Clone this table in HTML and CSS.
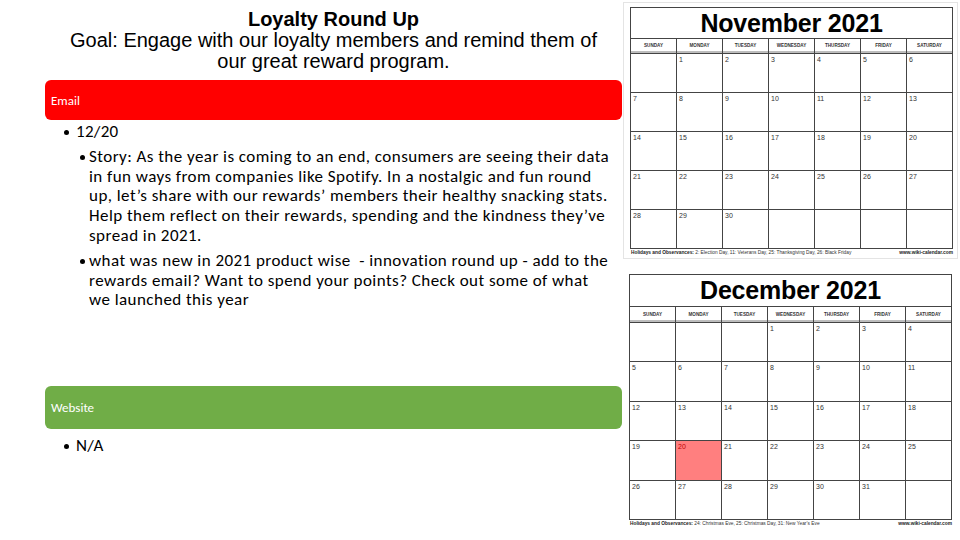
FILE: index.html
```html
<!DOCTYPE html>
<html>
<head>
<meta charset="utf-8">
<link rel="stylesheet" href="styles.css">
</head>
<body>
<div class="slide">
  <div class="left">
    <div class="heading">
      <div class="title">Loyalty Round Up</div>
      <div class="goal">Goal: Engage with our loyalty members and remind them of<br>our great reward program.</div>
    </div>
    <div class="bar bar-red">Email</div>
    <ul class="list">
      <li class="l1">12/20</li>
      <li class="l2">Story: As the year is coming to an end, consumers are seeing their data<br>in fun ways from companies like Spotify. In a nostalgic and fun round<br>up, let’s share with our rewards’ members their healthy snacking stats.<br>Help them reflect on their rewards, spending and the kindness they’ve<br>spread in 2021.</li>
      <li class="l2">what was new in 2021 product wise &nbsp;- innovation round up - add to the<br>rewards email? Want to spend your points? Check out some of what<br>we launched this year</li>
    </ul>
    <div class="spacer"></div>
    <div class="bar bar-green">Website</div>
    <ul class="list list-web">
      <li class="l1">N/A</li>
    </ul>
  </div>
  <div class="right">
    <div class="calwrap framed">
      <div class="cal">
        <div class="cal-title">November 2021</div>
        <div class="dh">SUNDAY</div><div class="dh">MONDAY</div><div class="dh">TUESDAY</div><div class="dh">WEDNESDAY</div><div class="dh">THURSDAY</div><div class="dh">FRIDAY</div><div class="dh">SATURDAY</div>
        <div class="d"></div><div class="d">1</div><div class="d">2</div><div class="d">3</div><div class="d">4</div><div class="d">5</div><div class="d">6</div>
        <div class="d">7</div><div class="d">8</div><div class="d">9</div><div class="d">10</div><div class="d">11</div><div class="d">12</div><div class="d">13</div>
        <div class="d">14</div><div class="d">15</div><div class="d">16</div><div class="d">17</div><div class="d">18</div><div class="d">19</div><div class="d">20</div>
        <div class="d">21</div><div class="d">22</div><div class="d">23</div><div class="d">24</div><div class="d">25</div><div class="d">26</div><div class="d">27</div>
        <div class="d">28</div><div class="d">29</div><div class="d">30</div><div class="d"></div><div class="d"></div><div class="d"></div><div class="d"></div>
      </div>
      <div class="cal-foot"><span><b>Holidays and Observances:</b> 2: Election Day, 11: Veterans Day, 25: Thanksgiving Day, 26: Black Friday</span><b>www.wiki-calendar.com</b></div>
    </div>
    <div class="calwrap dec">
      <div class="cal">
        <div class="cal-title">December 2021</div>
        <div class="dh">SUNDAY</div><div class="dh">MONDAY</div><div class="dh">TUESDAY</div><div class="dh">WEDNESDAY</div><div class="dh">THURSDAY</div><div class="dh">FRIDAY</div><div class="dh">SATURDAY</div>
        <div class="d"></div><div class="d"></div><div class="d"></div><div class="d">1</div><div class="d">2</div><div class="d">3</div><div class="d">4</div>
        <div class="d">5</div><div class="d">6</div><div class="d">7</div><div class="d">8</div><div class="d">9</div><div class="d">10</div><div class="d">11</div>
        <div class="d">12</div><div class="d">13</div><div class="d">14</div><div class="d">15</div><div class="d">16</div><div class="d">17</div><div class="d">18</div>
        <div class="d">19</div><div class="d hl">20</div><div class="d">21</div><div class="d">22</div><div class="d">23</div><div class="d">24</div><div class="d">25</div>
        <div class="d">26</div><div class="d">27</div><div class="d">28</div><div class="d">29</div><div class="d">30</div><div class="d">31</div><div class="d"></div>
      </div>
      <div class="cal-foot"><span><b>Holidays and Observances:</b> 24: Christmas Eve, 25: Christmas Day, 31: New Year’s Eve</span><b>www.wiki-calendar.com</b></div>
    </div>
  </div>
</div>
</body>
</html>
```
FILE: styles.css
```css
html, body {
  margin: 0;
  padding: 0;
  background: #ffffff;
}
.slide {
  width: 960px;
  height: 540px;
  display: flex;
  overflow: hidden;
}
.left {
  width: 577px;
  margin-left: 45px;
  display: flex;
  flex-direction: column;
}
.heading {
  height: 80px;
  padding-top: 9px;
  box-sizing: border-box;
  text-align: center;
  font-family: "Liberation Sans", Arial, sans-serif;
  color: #000;
}
.title {
  font-weight: bold;
  font-size: 20px;
  line-height: 21px;
}
.goal {
  font-size: 20px;
  line-height: 21px;
}
.bar {
  border-radius: 6px;
  color: #fff;
  font-family: Carlito, Calibri, Lato, sans-serif;
  font-size: 13px;
  display: flex;
  align-items: center;
  padding-left: 6px;
}
.bar-red {
  background: #ff0000;
  height: 40px;
}
.bar-green {
  background: #70ad47;
  height: 43px;
}
.list {
  list-style: none;
  margin: 0;
  padding: 0;
  font-family: Carlito, Calibri, Lato, sans-serif;
  font-size: 17px;
  color: #000;
}
.list li {
  position: relative;
  line-height: 19.8px;
  white-space: nowrap;
}
.list li::before {
  content: "";
  position: absolute;
  width: 5px;
  height: 5px;
  border-radius: 50%;
  background: #000;
  top: 8px;
}
.l1 {
  padding-left: 31px;
  margin-top: 2px;
  letter-spacing: 0.3px;
}
.l1::before { left: 19px; }
.l2 {
  padding-left: 44px;
  margin-top: 5px;
  letter-spacing: 0.45px;
}
.l2::before { left: 35px; }
.spacer {
  flex: 0 0 76px;
}
.list-web .l1 {
  margin-top: 7px;
}
.right {
  width: 337px;
  padding-top: 2px;
  margin-left: 1px;
  display: flex;
  flex-direction: column;
}
.calwrap {
  width: 335px;
  box-sizing: border-box;
  padding: 4px 5px 0 6px;
}
.framed {
  border: 1px solid #e4e4e4;
  height: 257px;
}
.dec {
  margin-top: 15px;
  padding-top: 0;
}
.cal {
  display: grid;
  grid-template-columns: repeat(7, 45px);
  grid-template-rows: 30px 14px repeat(5, 38px);
  gap: 1px;
  background: #444;
  border: 1px solid #444;
  width: max-content;
  font-family: "Liberation Sans", Arial, sans-serif;
}
.dec .cal {
  grid-template-rows: 31px 15px repeat(5, 38.4px);
}
.cal-title {
  grid-column: 1 / span 7;
  background: #fff;
  font-size: 25px;
  font-weight: bold;
  line-height: 31px;
  text-align: center;
  color: #000;
  letter-spacing: -0.2px;
}
.dh {
  background: #fff;
  font-size: 4.6px;
  font-weight: bold;
  color: #333;
  text-align: center;
  line-height: 14px;
  box-shadow: inset 0 -2px 0 #bdbdbd;
}
.dec .dh {
  line-height: 15px;
}
.d {
  background: #fff;
  font-size: 7px;
  color: #333;
  padding: 2px 0 0 2px;
  box-sizing: border-box;
}
.d.hl {
  background: #ff7f7f;
  color: #c00000;
}
.cal-foot {
  display: flex;
  justify-content: space-between;
  width: 324px;
  font-family: "Liberation Sans", Arial, sans-serif;
  font-size: 4.8px;
  line-height: 8px;
  color: #333;
  padding: 0 1px;
  box-sizing: border-box;
}
.cal-foot b { color: #222; }
```
